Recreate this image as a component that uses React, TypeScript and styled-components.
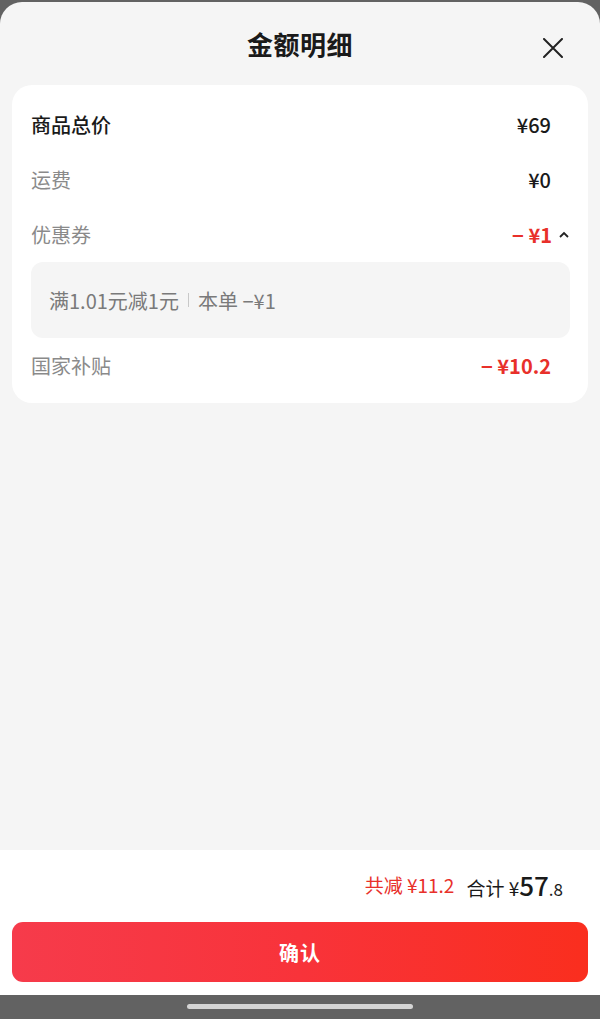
import React from "react";
import styled, { createGlobalStyle } from "styled-components";

const GlobalStyle = createGlobalStyle`
  html, body {
    margin: 0;
    padding: 0;
    background: #626262;
    font-family: "Noto Sans CJK SC", "Noto Sans", sans-serif;
  }
  * { box-sizing: border-box; }
`;

const Screen = styled.div`
  width: 600px;
  height: 1019px;
  display: flex;
  flex-direction: column;
  background: #626262;
  padding-top: 2px;
  overflow: hidden;
`;

const Sheet = styled.div`
  flex: 1;
  display: flex;
  flex-direction: column;
  background: #f5f5f5;
  border-radius: 22px 22px 0 0;
  overflow: hidden;
`;

const Header = styled.div`
  height: 83px;
  display: grid;
  grid-template-columns: 1fr auto 1fr;
  align-items: center;
  padding: 0 37px 0 37px;
`;

const Title = styled.h1`
  grid-column: 2;
  margin: 0;
  font-size: 26px;
  font-weight: 700;
  color: #1a1a1a;
  letter-spacing: 0.5px;
`;

const CloseButton = styled.button`
  grid-column: 3;
  justify-self: end;
  width: 20px;
  height: 20px;
  margin-top: 8px;
  padding: 0;
  border: none;
  background: transparent;
  display: flex;
`;

const Card = styled.div`
  margin: 0 12px;
  background: #fff;
  border-radius: 20px;
  padding: 12px 18px 10px 19px;
`;

const Row = styled.div`
  height: 55px;
  display: flex;
  align-items: center;
  justify-content: space-between;
`;

const Label = styled.span<{ $strong?: boolean }>`
  font-size: 20px;
  font-weight: ${(p) => (p.$strong ? 500 : 400)};
  color: ${(p) => (p.$strong ? "#1a1a1a" : "#8a8a8a")};
`;

const Value = styled.span<{ $red?: boolean; $chevron?: boolean }>`
  display: flex;
  align-items: center;
  gap: 6px;
  font-size: 20px;
  font-weight: ${(p) => (p.$red ? 700 : 500)};
  color: ${(p) => (p.$red ? "#e8302a" : "#1a1a1a")};
  margin-right: ${(p) => (p.$chevron ? "0" : "19px")};
`;

const CouponBox = styled.div`
  height: 76px;
  background: #f5f5f5;
  border-radius: 12px;
  display: flex;
  align-items: center;
  padding: 0 18px;
  font-size: 20px;
  color: #7a7a7a;
`;

const Divider = styled.span`
  width: 1px;
  height: 14px;
  background: #c8c8c8;
  margin: 0 9px;
`;

const Spacer = styled.div`
  flex: 1;
`;

const Footer = styled.div`
  background: #fff;
  padding: 0 12px 13px;
`;

const TotalRow = styled.div`
  height: 72px;
  display: flex;
  align-items: center;
  justify-content: flex-end;
  padding: 0 25px 4px 0;
  gap: 12px;
`;

const Saved = styled.span`
  font-size: 19px;
  color: #e8302a;
`;

const Total = styled.span`
  font-size: 19px;
  color: #1a1a1a;
  display: flex;
  align-items: baseline;
`;

const Big = styled.span`
  font-size: 26px;
  font-weight: 500;
`;

const Small = styled.span`
  font-size: 17px;
`;

const ConfirmButton = styled.button`
  width: 100%;
  height: 60px;
  border: none;
  border-radius: 11px;
  background: linear-gradient(90deg, #f63b4b 0%, #f8333a 50%, #fa2e1e 100%);
  color: #fff;
  font-family: inherit;
  font-size: 20px;
  font-weight: 700;
  letter-spacing: 1px;
`;

const NavBar = styled.div`
  height: 24px;
  background: #626262;
  display: flex;
  justify-content: center;
  padding-top: 9px;
`;

const HomeIndicator = styled.div`
  width: 226px;
  height: 5px;
  border-radius: 3px;
  background: #d4d4d4;
`;

const CloseIcon = () => (
  <svg width="20" height="20" viewBox="0 0 20 20">
    <path d="M1 1 L19 19 M19 1 L1 19" stroke="#222" strokeWidth="2" strokeLinecap="round" />
  </svg>
);

const ChevronUp = () => (
  <svg width="12" height="12" viewBox="0 0 12 12">
    <path d="M2 8 L6 4 L10 8" stroke="#222" strokeWidth="1.8" fill="none" />
  </svg>
);

export default function App() {
  return (
    <>
      <GlobalStyle />
      <Screen>
        <Sheet>
          <Header>
            <Title>金额明细</Title>
            <CloseButton aria-label="关闭">
              <CloseIcon />
            </CloseButton>
          </Header>
          <Card>
            <Row>
              <Label $strong>商品总价</Label>
              <Value>¥69</Value>
            </Row>
            <Row>
              <Label>运费</Label>
              <Value>¥0</Value>
            </Row>
            <Row>
              <Label>优惠券</Label>
              <Value $red $chevron>
                − ¥1
                <ChevronUp />
              </Value>
            </Row>
            <CouponBox>
              满1.01元减1元
              <Divider />
              本单 −¥1
            </CouponBox>
            <Row>
              <Label>国家补贴</Label>
              <Value $red>− ¥10.2</Value>
            </Row>
          </Card>
          <Spacer />
          <Footer>
            <TotalRow>
              <Saved>共减 ¥11.2</Saved>
              <Total>
                合计 ¥<Big>57</Big>
                <Small>.8</Small>
              </Total>
            </TotalRow>
            <ConfirmButton>确认</ConfirmButton>
          </Footer>
        </Sheet>
        <NavBar>
          <HomeIndicator />
        </NavBar>
      </Screen>
    </>
  );
}
